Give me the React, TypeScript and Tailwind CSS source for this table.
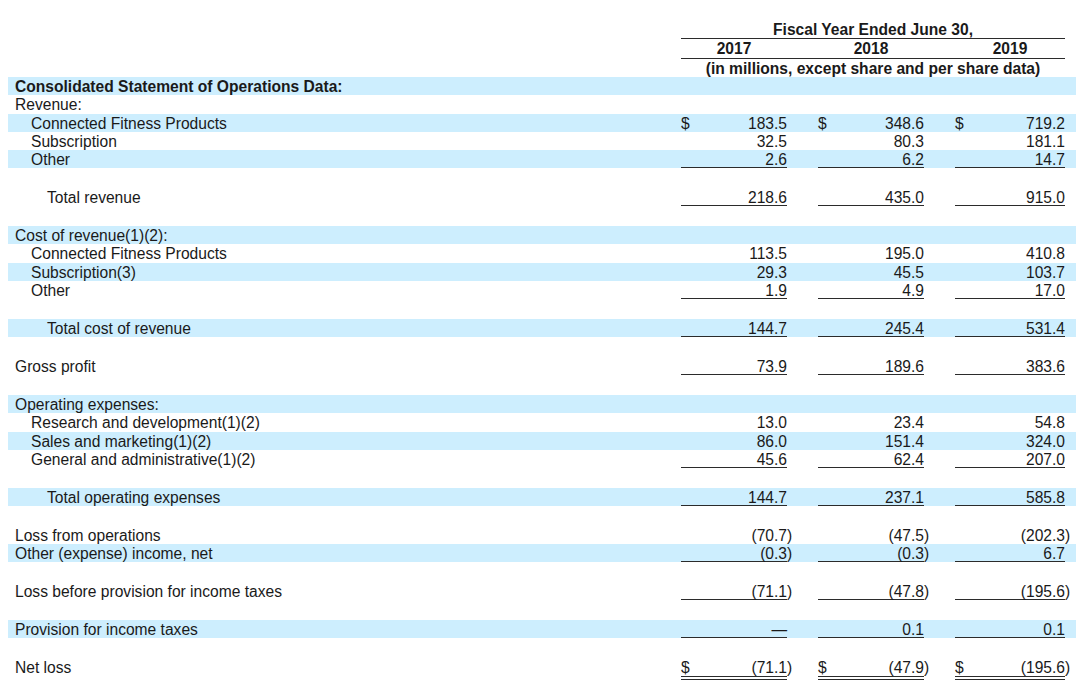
import React from 'react';

type Line = 'single' | 'double' | undefined;

type Row =
  | { spacer: true }
  | {
      spacer?: false;
      label: string;
      indent?: 0 | 1 | 2;
      stripe?: boolean;
      bold?: boolean;
      vals?: [string, string, string];
      dollar?: boolean;
      line?: Line;
    };

const rows: Row[] = [
  { label: 'Consolidated Statement of Operations Data:', stripe: true, bold: true },
  { label: 'Revenue:' },
  { label: 'Connected Fitness Products', indent: 1, stripe: true, vals: ['183.5', '348.6', '719.2'], dollar: true },
  { label: 'Subscription', indent: 1, vals: ['32.5', '80.3', '181.1'] },
  { label: 'Other', indent: 1, stripe: true, vals: ['2.6', '6.2', '14.7'], line: 'single' },
  { spacer: true },
  { label: 'Total revenue', indent: 2, vals: ['218.6', '435.0', '915.0'], line: 'single' },
  { spacer: true },
  { label: 'Cost of revenue(1)(2):', stripe: true },
  { label: 'Connected Fitness Products', indent: 1, vals: ['113.5', '195.0', '410.8'] },
  { label: 'Subscription(3)', indent: 1, stripe: true, vals: ['29.3', '45.5', '103.7'] },
  { label: 'Other', indent: 1, vals: ['1.9', '4.9', '17.0'], line: 'single' },
  { spacer: true },
  { label: 'Total cost of revenue', indent: 2, stripe: true, vals: ['144.7', '245.4', '531.4'], line: 'single' },
  { spacer: true },
  { label: 'Gross profit', vals: ['73.9', '189.6', '383.6'], line: 'single' },
  { spacer: true },
  { label: 'Operating expenses:', stripe: true },
  { label: 'Research and development(1)(2)', indent: 1, vals: ['13.0', '23.4', '54.8'] },
  { label: 'Sales and marketing(1)(2)', indent: 1, stripe: true, vals: ['86.0', '151.4', '324.0'] },
  { label: 'General and administrative(1)(2)', indent: 1, vals: ['45.6', '62.4', '207.0'], line: 'single' },
  { spacer: true },
  { label: 'Total operating expenses', indent: 2, stripe: true, vals: ['144.7', '237.1', '585.8'], line: 'single' },
  { spacer: true },
  { label: 'Loss from operations', vals: ['(70.7)', '(47.5)', '(202.3)'] },
  { label: 'Other (expense) income, net', stripe: true, vals: ['(0.3)', '(0.3)', '6.7'], line: 'single' },
  { spacer: true },
  { label: 'Loss before provision for income taxes', vals: ['(71.1)', '(47.8)', '(195.6)'], line: 'single' },
  { spacer: true },
  { label: 'Provision for income taxes', stripe: true, vals: ['—', '0.1', '0.1'], line: 'single' },
  { spacer: true },
  { label: 'Net loss', vals: ['(71.1)', '(47.9)', '(195.6)'], dollar: true, line: 'double' },
];

const widths = ['w-[106px]', 'w-[106px]', 'w-[110px]'];
const gaps = ['w-[31px]', 'w-[31px]', 'w-[11px]'];

function Value({ v, dollar, line, i }: { v: string; dollar?: boolean; line: Line; i: number }) {
  const neg = v.endsWith(')');
  const num = neg ? v.slice(0, -1) : v;
  return (
    <>
      <div
        className={`${widths[i]} flex justify-between ${
          line === 'single'
            ? 'h-[18.3px] border-b border-[#2b2b2b]'
            : line === 'double'
            ? 'h-[22.3px] border-b-4 border-double border-[#2b2b2b]'
            : 'h-[18.3px]'
        }`}
      >
        <span>{dollar ? '$' : ''}</span>
        <span>{num}</span>
      </div>
      <div className={gaps[i]}>{neg ? ')' : ''}</div>
    </>
  );
}

export default function App() {
  return (
    <div
      className="min-h-screen bg-white text-[#1a1a1a] text-[15.6px] leading-[20px]"
      style={{ fontFamily: '"Liberation Sans", Arial, sans-serif' }}
    >
      <div className="ml-[8px] w-[1068px] flex flex-col">
        {/* Header */}
        <div className="flex pt-[20px] font-bold">
          <div className="w-[673px]" />
          <div className="w-[384px] flex flex-col">
            <div className="h-[19px] border-b border-[#2b2b2b] text-center leading-[19px]">
              Fiscal Year Ended June 30,
            </div>
            <div className="h-[20px] border-b border-[#2b2b2b] flex leading-[19px]">
              <div className="w-[106px] text-center">2017</div>
              <div className="w-[31px]" />
              <div className="w-[106px] text-center">2018</div>
              <div className="w-[31px]" />
              <div className="w-[110px] text-center">2019</div>
            </div>
            <div className="h-[18px] text-center leading-[19px]">
              (in millions, except share and per share data)
            </div>
          </div>
        </div>

        {/* Body */}
        {rows.map((row, idx) => {
          if (row.spacer) return <div key={idx} className="h-[19.7px]" />;
          const pad = row.indent === 2 ? 'pl-[39px]' : row.indent === 1 ? 'pl-[23px]' : 'pl-[7px]';
          return (
            <div
              key={idx}
              className={`flex items-start ${row.stripe ? 'bg-[#cdeefe]' : ''} ${
                row.line === 'double' ? 'h-[22.3px]' : 'h-[18.3px]'
              }`}
            >
              <div className={`w-[673px] h-[18.3px] ${pad} ${row.bold ? 'font-bold' : ''}`}>{row.label}</div>
              {row.vals &&
                row.vals.map((v, i) => (
                  <Value key={i} v={v} i={i} dollar={row.dollar} line={row.line} />
                ))}
            </div>
          );
        })}
      </div>
    </div>
  );
}
